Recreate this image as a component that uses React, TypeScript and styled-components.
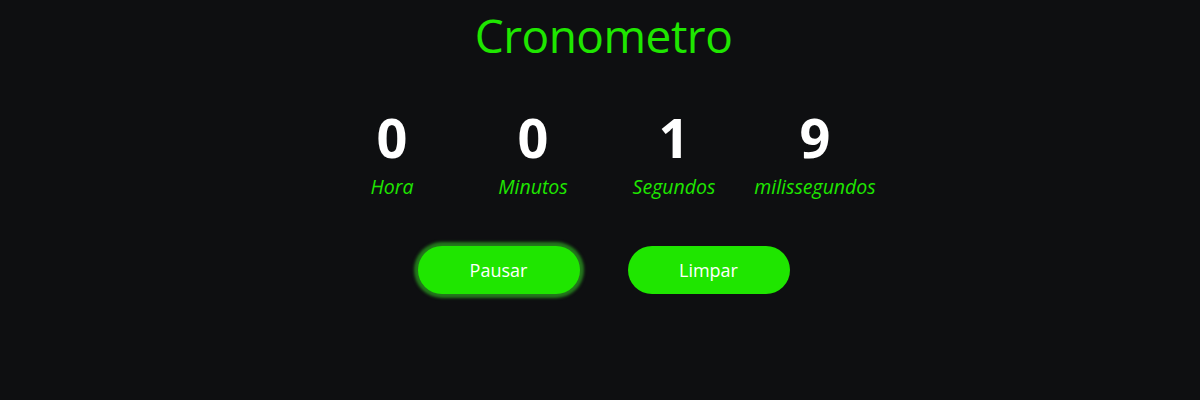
import React from "react";
import styled, { createGlobalStyle } from "styled-components";

const Global = createGlobalStyle`
  html, body { margin: 0; padding: 0; background: #0e0f11; }
  body { font-family: "Open Sans", "Noto Sans", sans-serif; }
`;

const Page = styled.main`
  width: 1200px;
  height: 400px;
  box-sizing: border-box;
  padding-left: 7px;
  display: flex;
  flex-direction: column;
  align-items: center;
  background: #0e0f11;
`;

const Title = styled.h1`
  margin: 4px 0 0;
  font-size: 46px;
  font-weight: 400;
  line-height: 62px;
  color: #1fe600;
  letter-spacing: -0.5px;
`;

const Counter = styled.section`
  margin-top: 45px;
  display: grid;
  grid-template-columns: repeat(4, 141px);
`;

const Unit = styled.div`
  display: flex;
  flex-direction: column;
  align-items: center;
  gap: 11px;
`;

const Digit = styled.span`
  font-size: 54px;
  font-weight: 700;
  line-height: 52px;
  color: #ffffff;
`;

const Label = styled.span`
  font-size: 19.5px;
  font-style: italic;
  line-height: 26px;
  color: #1fe600;
`;

const Buttons = styled.div`
  margin-top: 46px;
  display: flex;
  gap: 48px;
`;

const Button = styled.button<{ $focused?: boolean }>`
  width: 162px;
  height: 48px;
  border: none;
  border-radius: 24px;
  background: #1fe600;
  color: #ffffff;
  font-family: "Open Sans", "Noto Sans", sans-serif;
  font-size: 18px;
  cursor: pointer;
  box-shadow: ${(p) => (p.$focused ? "0 0 3px 4px rgba(40, 140, 30, 0.85)" : "none")};
`;

const units = [
  { value: 0, label: "Hora" },
  { value: 0, label: "Minutos" },
  { value: 1, label: "Segundos" },
  { value: 9, label: "milissegundos" },
];

export default function App() {
  return (
    <>
      <Global />
      <Page>
        <Title>Cronometro</Title>
        <Counter>
          {units.map((u) => (
            <Unit key={u.label}>
              <Digit>{u.value}</Digit>
              <Label>{u.label}</Label>
            </Unit>
          ))}
        </Counter>
        <Buttons>
          <Button $focused>Pausar</Button>
          <Button>Limpar</Button>
        </Buttons>
      </Page>
    </>
  );
}
